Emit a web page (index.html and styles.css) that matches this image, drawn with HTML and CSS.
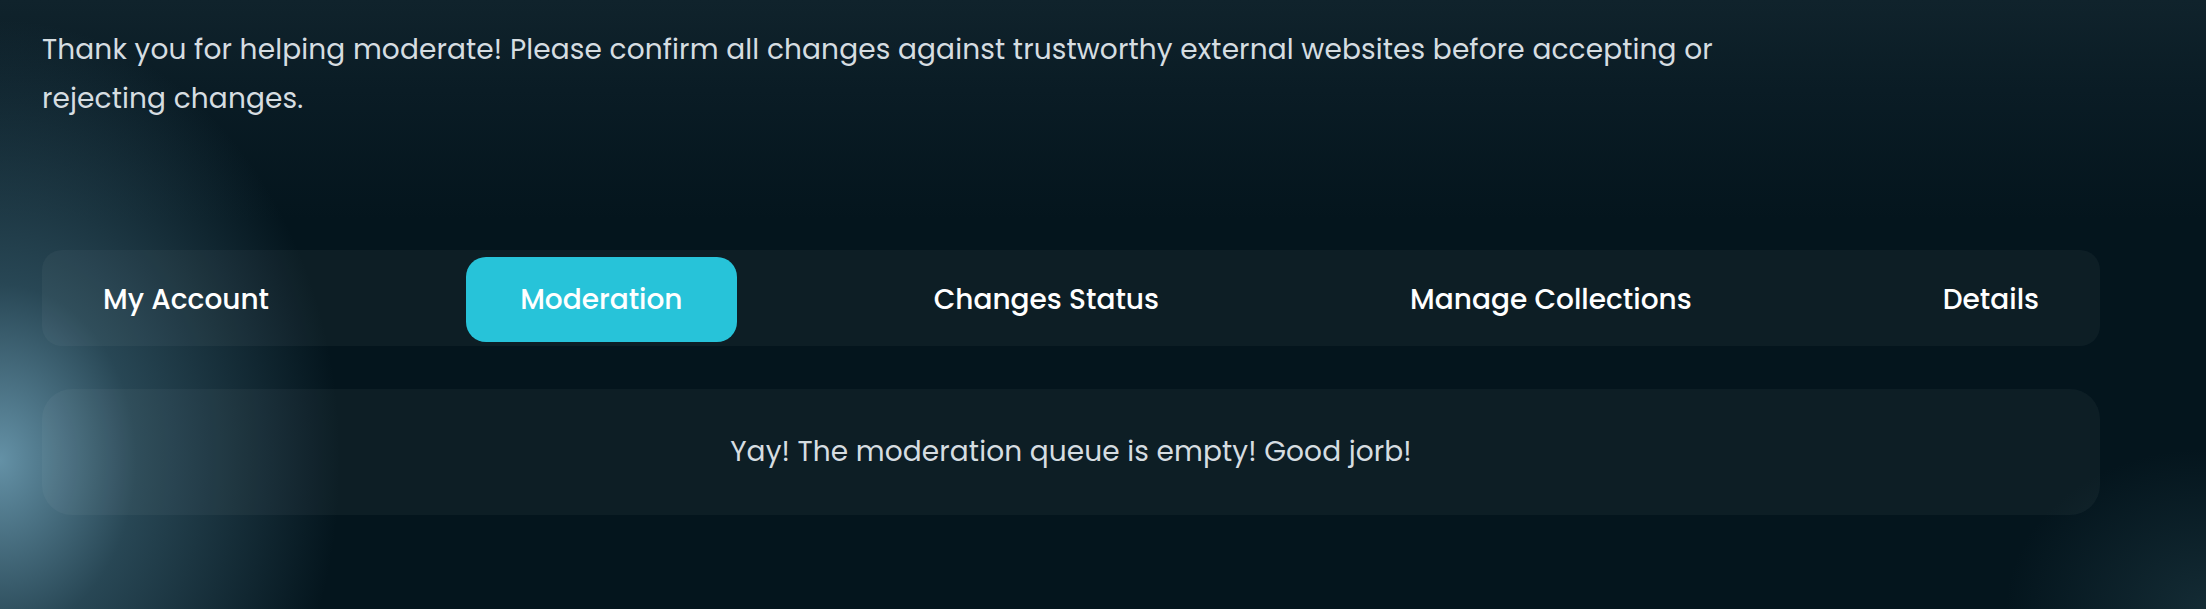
FILE: index.html
```html
<!DOCTYPE html>
<html>
<head>
    <title>Moderation</title>
    <link rel="stylesheet" href="styles.css">
</head>
<body>
    <div class="page">
        <p class="intro">Thank you for helping moderate! Please confirm all changes against trustworthy external websites before accepting or rejecting changes.</p>

        <nav class="tabs">
            <button class="tab">My Account</button>
            <button class="tab active">Moderation</button>
            <button class="tab">Changes Status</button>
            <button class="tab">Manage Collections</button>
            <button class="tab">Details</button>
        </nav>

        <div class="queue">
            <p>Yay! The moderation queue is empty! Good jorb!</p>
        </div>
    </div>
</body>
</html>
```

FILE: styles.css
```css
html, body {
    height: 100%;
}
body {
    margin: 0;
    font-family: Poppins, "Open Sans", sans-serif;
    color: #d6dde1;
    background-color: #04151d;
    background-image:
        radial-gradient(ellipse 340px 440px at 0 460px, rgba(100, 145, 166, 1), rgba(64, 104, 122, 0.6) 40%, rgba(4, 21, 29, 0) 100%),
        radial-gradient(ellipse 200px 160px at 100% 100%, rgba(30, 58, 68, 0.6), rgba(4, 21, 29, 0) 100%),
        linear-gradient(to bottom, #10232c 0, #0a1c25 90px, rgba(4, 21, 29, 0) 220px);
    overflow: hidden;
}
.page {
    padding: 25px 106px 0 42px;
}
.intro {
    max-width: 1740px;
    margin: 0 0 127px;
    font-size: 28px;
    line-height: 49px;
    letter-spacing: 0.12px;
}
.tabs {
    display: flex;
    justify-content: space-between;
    padding: 7px 7px 4px;
    border-radius: 20px;
    background: rgba(255, 255, 255, 0.04);
}
.tab {
    height: 85px;
    padding: 0 54px;
    border: none;
    border-radius: 20px;
    background: transparent;
    color: #fff;
    font-family: inherit;
    font-size: 28px;
    font-weight: 500;
}
.tab.active {
    background: #27c3d9;
}
.queue {
    display: flex;
    align-items: center;
    justify-content: center;
    height: 126px;
    margin-top: 43px;
    border-radius: 30px;
    background: rgba(255, 255, 255, 0.04);
}
.queue p {
    margin: 0;
    font-size: 28px;
    letter-spacing: 0.1px;
}
```
